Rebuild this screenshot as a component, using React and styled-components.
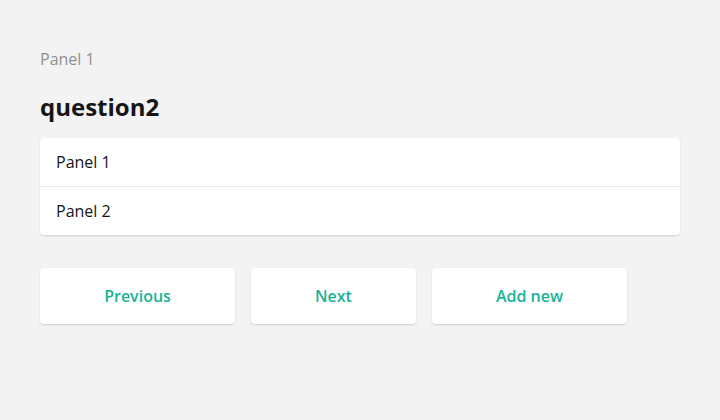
import styled, { createGlobalStyle } from "styled-components";

const Global = createGlobalStyle`
  body {
    margin: 0;
    background: #f3f3f3;
    font-family: "Open Sans", "DejaVu Sans", sans-serif;
  }
`;

const Page = styled.div`
  padding: 47px 40px 40px;
  box-sizing: border-box;
  min-height: 420px;
  background: #f3f3f3;
`;

const PanelLabel = styled.div`
  font-size: 16px;
  line-height: 24px;
  color: #909090;
`;

const Title = styled.h2`
  margin: 20px 0 15px;
  font-size: 24px;
  line-height: 32px;
  font-weight: 700;
  color: #161616;
`;

const List = styled.div`
  background: #fff;
  border-radius: 4px;
  box-shadow: 0 1px 2px rgba(0, 0, 0, 0.15);
  display: flex;
  flex-direction: column;
`;

const Item = styled.div`
  height: 48px;
  padding: 0 16px;
  display: flex;
  align-items: center;
  font-size: 16px;
  color: #161616;
  border-top: ${(p) => (p.$first ? "none" : "1px solid #e8e8e8")};
  box-sizing: content-box;
`;

const Nav = styled.div`
  margin-top: 33px;
  display: flex;
  gap: 16px;
`;

const Button = styled.button`
  width: ${(p) => p.$w}px;
  height: 56px;
  border: none;
  border-radius: 4px;
  background: #fff;
  box-shadow: 0 1px 2px rgba(0, 0, 0, 0.15);
  font-family: inherit;
  font-size: 16px;
  font-weight: 600;
  color: #19b394;
  cursor: pointer;
`;

export default function App() {
  return (
    <>
      <Global />
      <Page>
        <PanelLabel>Panel 1</PanelLabel>
        <Title>question2</Title>
        <List>
          <Item $first>Panel 1</Item>
          <Item>Panel 2</Item>
        </List>
        <Nav>
          <Button $w={195}>Previous</Button>
          <Button $w={165}>Next</Button>
          <Button $w={195}>Add new</Button>
        </Nav>
      </Page>
    </>
  );
}
